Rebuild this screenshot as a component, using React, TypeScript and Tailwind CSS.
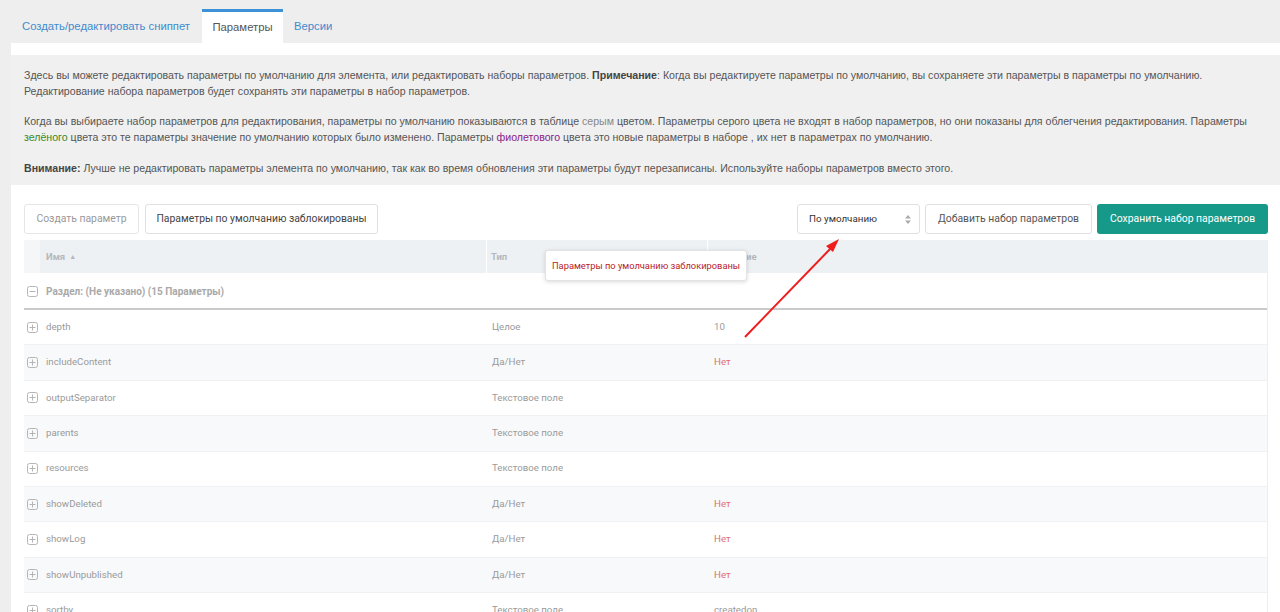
import React from "react";

const rows: { name: string; type: string; value?: string; red?: boolean }[] = [
  { name: "depth", type: "Целое", value: "10" },
  { name: "includeContent", type: "Да/Нет", value: "Нет", red: true },
  { name: "outputSeparator", type: "Текстовое поле" },
  { name: "parents", type: "Текстовое поле" },
  { name: "resources", type: "Текстовое поле" },
  { name: "showDeleted", type: "Да/Нет", value: "Нет", red: true },
  { name: "showLog", type: "Да/Нет", value: "Нет", red: true },
  { name: "showUnpublished", type: "Да/Нет", value: "Нет", red: true },
  { name: "sortby", type: "Текстовое поле", value: "createdon" },
];

function PlusBox({ minus }: { minus?: boolean }) {
  return (
    <svg width="11" height="11" viewBox="0 0 11 11" className="block">
      <rect x="0.5" y="0.5" width="10" height="10" rx="2" fill="none" stroke="#b5b5b5" />
      <line x1="2.5" y1="5.5" x2="8.5" y2="5.5" stroke="#b5b5b5" />
      {!minus && <line x1="5.5" y1="2.5" x2="5.5" y2="8.5" stroke="#b5b5b5" />}
    </svg>
  );
}

export default function App() {
  return (
    <div className="relative w-[1280px] h-[612px] overflow-hidden bg-[#eeeeee] pl-[11px] font-['Liberation_Sans',Arial,sans-serif]">
      {/* tabs */}
      <div className="flex h-[43px] items-end pt-[9px]">
        <div className="h-[34px] w-[191px] flex items-center pl-[11px] whitespace-nowrap text-[11.3px] text-[#3e8ccd]">
          Создать/редактировать сниппет
        </div>
        <div className="h-[34px] w-[81px] flex items-center justify-center bg-white border-t-[3px] border-[#3d91d7] whitespace-nowrap text-[11.3px] text-[#555]">
          Параметры
        </div>
        <div className="h-[34px] flex items-center px-[11px] whitespace-nowrap text-[11.3px] text-[#3e8ccd]">Версии</div>
      </div>

      {/* panel */}
      <div className="bg-white pt-[12px]">
        <div className="bg-[#f0f0f0] pl-[13px] pr-[20px] pt-[12px] pb-[9px] text-[10.6px] leading-[16px] text-[#555]">
          <p className="whitespace-nowrap">
            Здесь вы можете редактировать параметры по умолчанию для элемента, или редактировать наборы параметров.{" "}
            <b className="text-[#444]">Примечание</b>: Когда вы редактируете параметры по умолчанию, вы сохраняете эти параметры в параметры по умолчанию.
            <br />
            Редактирование набора параметров будет сохранять эти параметры в набор параметров.
          </p>
          <p className="mt-[14px] whitespace-nowrap">
            Когда вы выбираете набор параметров для редактирования, параметры по умолчанию показываются в таблице{" "}
            <span className="text-[#888]">серым</span> цветом. Параметры серого цвета не входят в набор параметров, но они показаны для облегчения редактирования. Параметры
            <br />
            <span className="text-[#3a8a2a]">зелёного</span> цвета это те параметры значение по умолчанию которых было изменено. Параметры{" "}
            <span className="text-[#8a1b8a]">фиолетового</span> цвета это новые параметры в наборе , их нет в параметрах по умолчанию.
          </p>
          <p className="mt-[15px] whitespace-nowrap">
            <b className="text-[#444]">Внимание:</b> Лучше не редактировать параметры элемента по умолчанию, так как во время обновления эти параметры будут перезаписаны. Используйте наборы параметров вместо этого.
          </p>
        </div>

        <div className="pl-[13px] pr-[12px] pt-[19px] pb-[40px] font-['Roboto',Arial,sans-serif]">
          {/* toolbar */}
          <div className="flex items-center h-[30px] whitespace-nowrap">
            <button className="h-[30px] w-[115px] border border-[#e6e6e6] rounded-[3px] bg-white text-[10.4px] text-[#999]">
              Создать параметр
            </button>
            <button className="ml-[6px] h-[30px] w-[233px] border border-[#e0e0e0] rounded-[3px] bg-white text-[10.4px] text-[#444]">
              Параметры по умолчанию заблокированы
            </button>
            <div className="flex-1" />
            <div className="h-[30px] w-[123px] border border-[#e0e0e0] rounded-[3px] bg-white flex items-center pl-[11px] pr-[7px] text-[9.8px] text-[#333]">
              <span className="flex-1">По умолчанию</span>
              <svg width="8" height="11" viewBox="0 0 8 11">
                <path d="M4 1 L7 4.5 H1 Z" fill="#aaa" />
                <path d="M4 10 L7 6.5 H1 Z" fill="#aaa" />
              </svg>
            </div>
            <button className="ml-[5px] h-[30px] w-[167px] border border-[#e0e0e0] rounded-[3px] bg-white text-[10.4px] text-[#555]">
              Добавить набор параметров
            </button>
            <button className="ml-[5px] h-[30px] w-[171px] rounded-[3px] bg-[#17998a] text-[10.4px] text-white">
              Сохранить набор параметров
            </button>
          </div>

          {/* table */}
          <div className="mt-[6px] border-r border-[#eceef0]">
            <div className="flex h-[33px] bg-[#eef1f4] text-[9.5px] font-bold text-[#b3b8bd]">
              <div className="w-[16px] bg-[#f4f6f8]" />
              <div className="w-[447px] flex items-center pl-[6px] pt-[1px] border-r border-white">
                Имя <span className="ml-[4px] text-[7px]">▲</span>
              </div>
              <div className="w-[221px] flex items-center pl-[4px] pt-[1px] border-r border-white">Тип</div>
              <div className="flex-1 flex items-center pl-[6px] pt-[1px]">Значение</div>
            </div>
            <div className="flex h-[37px] items-center pt-[1px] border-b-2 border-[#c9c9c9] text-[10px] font-bold text-[#a9a9a9]">
              <div className="w-[16px] flex justify-center">
                <PlusBox minus />
              </div>
              <div className="pl-[6px] whitespace-nowrap">Раздел: (Не указано) (15 Параметры)</div>
            </div>
            {rows.map((r, i) => (
              <div
                key={r.name}
                className={`flex h-[35.4px] items-center text-[9.7px] text-[#9a9a9a] ${i % 2 === 1 ? "bg-[#f8f9fa]" : "bg-white"} border-b border-[#f0f1f2]`}
              >
                <div className="w-[16px] flex justify-center pl-[1px]">
                  <PlusBox />
                </div>
                <div className="w-[447px] pl-[6px]">{r.name}</div>
                <div className="w-[221px] pl-[5px]">{r.type}</div>
                <div className={`flex-1 pl-[6px] ${r.red ? "text-[#e07070]" : ""}`}>{r.value}</div>
              </div>
            ))}
          </div>
        </div>
      </div>

      {/* tooltip */}
      <div className="absolute left-[545px] top-[250px] w-[202px] h-[31px] bg-white border border-[#e3e3e3] rounded-[3px] shadow-[0_1px_4px_rgba(0,0,0,0.15)] flex items-center justify-center whitespace-nowrap text-[9.3px] text-[#b8232a] font-['Roboto',Arial,sans-serif]">
        Параметры по умолчанию заблокированы
      </div>

      {/* red arrow annotation */}
      <svg className="absolute left-0 top-0 pointer-events-none" width="1280" height="612">
        <line x1="745" y1="337" x2="832" y2="247" stroke="#ee1c1c" strokeWidth="2" />
        <path d="M839 239 L826 246 L833 252 Z" fill="#ee1c1c" />
      </svg>
    </div>
  );
}
